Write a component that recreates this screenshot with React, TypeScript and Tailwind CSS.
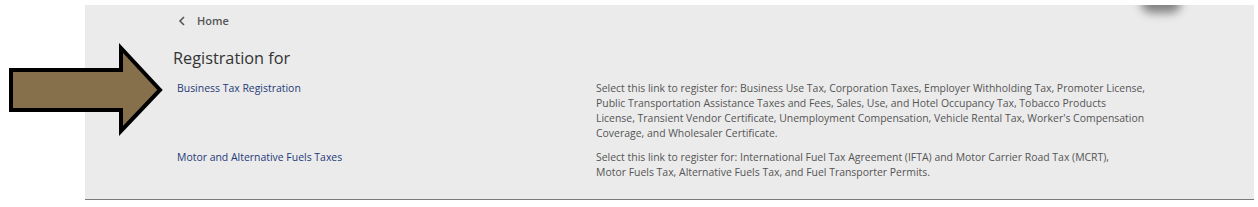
import React from "react";

const rows = [
  {
    title: "Business Tax Registration",
    lines: [
      "Select this link to register for: Business Use Tax, Corporation Taxes, Employer Withholding Tax, Promoter License,",
      "Public Transportation Assistance Taxes and Fees, Sales, Use, and Hotel Occupancy Tax, Tobacco Products",
      "License, Transient Vendor Certificate, Unemployment Compensation, Vehicle Rental Tax, Worker's Compensation",
      "Coverage, and Wholesaler Certificate.",
    ],
  },
  {
    title: "Motor and Alternative Fuels Taxes",
    lines: [
      "Select this link to register for: International Fuel Tax Agreement (IFTA) and Motor Carrier Road Tax (MCRT),",
      "Motor Fuels Tax, Alternative Fuels Tax, and Fuel Transporter Permits.",
    ],
  },
];

export default function App() {
  return (
    <div className="relative w-[1258px] h-[207px] bg-white overflow-hidden font-['Open_Sans',sans-serif]">
      <div className="ml-[85px] mt-[5px] w-[1169px] h-[195px] bg-[#ebebeb] border-b border-[#7a7a7a] relative overflow-hidden">
        {/* shadow of something sitting above */}
        <div className="absolute left-[1056px] -top-[12px] w-[40px] h-[20px] rounded-full bg-[#555] blur-[5px] opacity-70" />

        <div className="pl-[88px] pt-[8px]">
          <div className="flex items-center gap-[11px] h-[16px] text-[11px] font-semibold text-[#555]">
            <svg width="8" height="10" viewBox="0 0 8 10" className="ml-[5px]">
              <path d="M6 1 L2 5 L6 9" fill="none" stroke="#555" strokeWidth="1.6" />
            </svg>
            <span>Home</span>
          </div>

          <h1 className="mt-[17px] text-[16.3px] leading-[24px] font-normal text-[#333]">Registration for</h1>

          <div className="mt-[11px] flex flex-col gap-[9px]">
            {rows.map((r) => (
              <div key={r.title} className="flex">
                <a className="w-[423px] pl-[4px] text-[10.45px] leading-[15px] text-[#1f3a78] cursor-pointer">
                  {r.title}
                </a>
                <p className="whitespace-nowrap text-[10.45px] leading-[15px] text-[#555]">
                  {r.lines.map((l, i) => (
                    <span key={i} className="block">
                      {l}
                    </span>
                  ))}
                </p>
              </div>
            ))}
          </div>
        </div>
      </div>

      {/* pointer arrow overlay */}
      <svg className="absolute left-0 top-[40px]" width="170" height="100" viewBox="0 0 170 100">
        <polygon
          points="11,30 121,30 121,8 160,50 121,91 121,70 11,70"
          fill="#85704b"
          stroke="#000"
          strokeWidth="4"
          strokeLinejoin="miter"
        />
      </svg>
    </div>
  );
}
